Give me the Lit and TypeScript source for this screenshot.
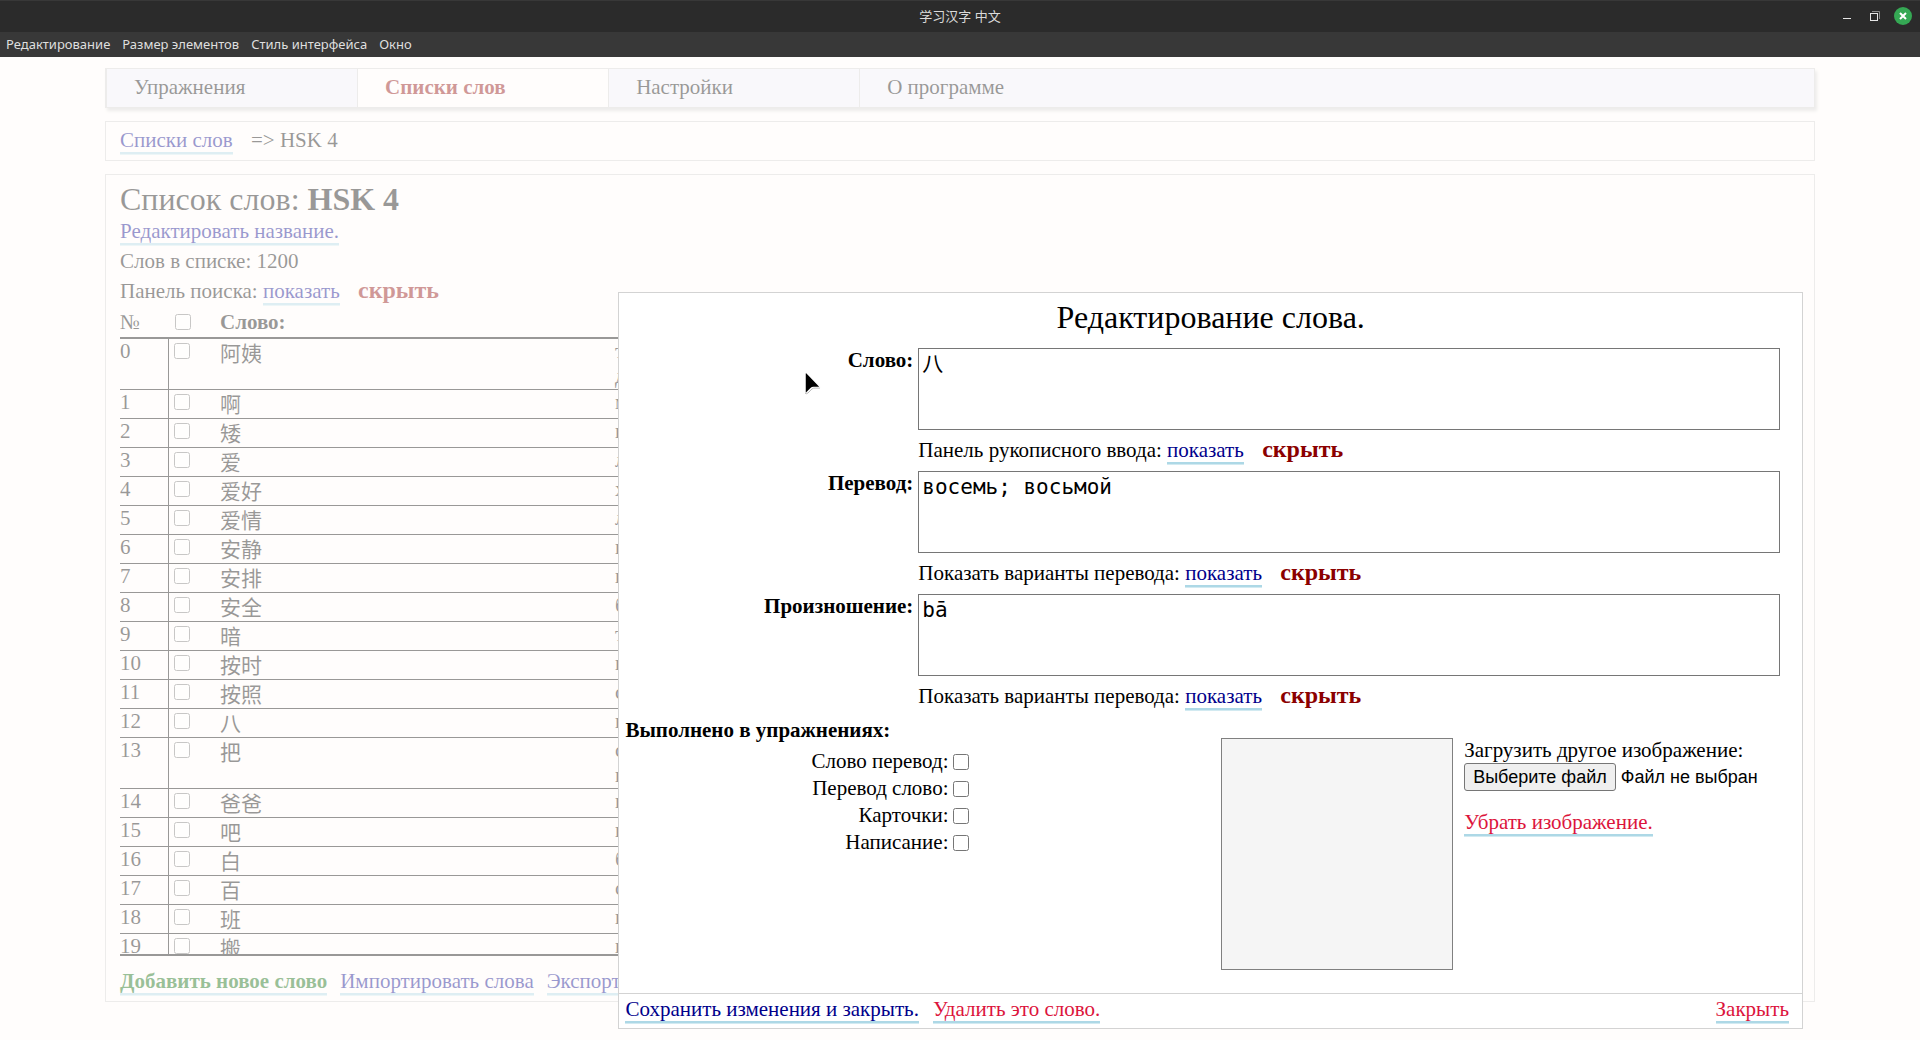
import { LitElement, html, css } from "lit";
import { customElement, property } from "lit/decorators.js";

const serif = css`"Liberation Serif", "Noto Sans CJK SC", serif`;

const linkStyles = css`
  a {
    display: inline-block;
    line-height: 24px;
    color: darkblue;
    text-decoration: none;
    border-bottom: 2px solid lightblue;
    box-shadow: 0 1px 0 #d2eaf1;
  }
  a.danger {
    color: crimson;
  }
  a.add {
    color: darkgreen;
    font-weight: bold;
  }
`;

const checkStyles = css`
  input[type="checkbox"] {
    width: 16px;
    height: 16px;
    margin: 0;
  }
`;

interface Word {
  text: string;
  translation: string[];
}

const WORDS: Word[] = [
  { text: "阿姨", translation: ["тётя", "домработница"] },
  { text: "啊", translation: ["междометие"] },
  { text: "矮", translation: ["низкий"] },
  { text: "爱", translation: ["любить"] },
  { text: "爱好", translation: ["хобби"] },
  { text: "爱情", translation: ["любовь"] },
  { text: "安静", translation: ["покой"] },
  { text: "安排", translation: ["план"] },
  { text: "安全", translation: ["безопасность"] },
  { text: "暗", translation: ["тёмный"] },
  { text: "按时", translation: ["вовремя"] },
  { text: "按照", translation: ["согласно"] },
  { text: "八", translation: ["восемь; восьмой"] },
  { text: "把", translation: ["счётное слово", "предлог"] },
  { text: "爸爸", translation: ["папа"] },
  { text: "吧", translation: ["ну"] },
  { text: "白", translation: ["белый"] },
  { text: "百", translation: ["сто"] },
  { text: "班", translation: ["группа"] },
  { text: "搬", translation: ["переносить"] },
];

/** Line with a caption and a pair of show / hide switches. */
@customElement("toggle-line")
export class ToggleLine extends LitElement {
  @property() caption = "";

  static styles = [
    linkStyles,
    css`
      :host {
        display: block;
      }
      .hide {
        margin-left: 13px;
        color: darkred;
        font-size: 24px;
        line-height: 24px;
        font-weight: bold;
      }
    `,
  ];

  render() {
    return html`${this.caption} <a href="#show">показать</a>
      <span class="hide">скрыть</span>`;
  }
}

@customElement("window-bar")
export class WindowBar extends LitElement {
  static styles = css`
    :host {
      display: block;
      font-family: "Noto Sans", "Noto Sans CJK SC", sans-serif;
    }
    .title {
      display: grid;
      grid-template-columns: 1fr auto 1fr;
      align-items: center;
      box-sizing: border-box;
      height: 32px;
      padding-bottom: 1px;
      border-top: 1px solid #383838;
      background: #2b2b2b;
      color: #dadada;
      font-size: 13px;
      line-height: 20px;
    }
    .name {
      grid-column: 2;
    }
    .buttons {
      display: flex;
      justify-content: flex-end;
      gap: 8px;
      padding-right: 7px;
    }
    button {
      display: block;
      padding: 0;
      border: 0;
      background: none;
      font: inherit;
      color: inherit;
    }
    svg {
      display: block;
    }
    .menu {
      display: flex;
      gap: 12px;
      height: 25px;
      padding: 0 6px;
      background: #383838;
      color: #dfdfdf;
      font-size: 13px;
      line-height: 25px;
    }
  `;

  render() {
    return html`
      <div class="title">
        <span class="name">学习汉字 中文</span>
        <div class="buttons">
          <button aria-label="Свернуть">
            <svg width="20" height="20" viewBox="0 0 20 20">
              <path d="M6 12.5h8" stroke="#e6e6e6" />
            </svg>
          </button>
          <button aria-label="Восстановить">
            <svg width="20" height="20" viewBox="0 0 20 20" fill="none">
              <path d="M7 5.5H14.5V13" stroke="#8c8c8c" />
              <rect x="5.500" y="7.500" width="7" height="7" stroke="#e6e6e6" />
            </svg>
          </button>
          <button aria-label="Закрыть">
            <svg width="20" height="20" viewBox="0 0 20 20">
              <circle cx="10" cy="10" r="9" fill="#35a854" />
              <path d="M7 7l6 6M13 7l-6 6" stroke="#fff" stroke-width="2" />
            </svg>
          </button>
        </div>
      </div>
      <div class="menu">
        ${["Редактирование", "Размер элементов", "Стиль интерфейса", "Окно"].map(
          (item) => html`<button>${item}</button>`
        )}
      </div>
    `;
  }
}

@customElement("word-list")
export class WordList extends LitElement {
  static styles = [
    linkStyles,
    checkStyles,
    css`
      :host {
        display: flex;
        flex-direction: column;
        min-height: 0;
        padding: 7px 13px 6px 14px;
        border: 1px solid lightgray;
        line-height: 30px;
      }
      h1 {
        margin: 0;
        font-size: 32px;
        font-weight: normal;
        line-height: 34px;
      }
      .scroll {
        flex: 1;
        min-height: 0;
        overflow: hidden;
        border-bottom: 2px solid #000;
      }
      table {
        width: 100%;
        border-spacing: 0;
        table-layout: fixed;
      }
      th,
      td {
        padding: 0;
        text-align: left;
        vertical-align: top;
        line-height: 25px;
        border-bottom: 1px solid #000;
      }
      th {
        padding: 4px 0 2px;
        border-bottom-width: 2px;
      }
      th.num {
        font-weight: normal;
      }
      .num {
        width: 48px;
      }
      .check {
        width: 52px;
      }
      .word {
        width: 395px;
      }
      td.check {
        border-left: 1px solid #000;
      }
      td.word {
        padding-bottom: 2px;
        line-height: 26px;
        font-family: "Noto Sans CJK SC", sans-serif;
      }
      .check input {
        display: block;
        margin: 4px 0 0 5px;
      }
      th.check input {
        margin-left: 7px;
      }
      footer {
        display: flex;
        gap: 13px;
        padding-top: 13px;
      }
    `,
  ];

  render() {
    return html`
      <h1>Список слов: <b>HSK 4</b></h1>
      <div><a href="#rename">Редактировать название.</a></div>
      <div>Слов в списке: 1200</div>
      <toggle-line caption="Панель поиска:"></toggle-line>
      <div class="scroll">
        <table>
          <thead>
            <tr>
              <th class="num">№</th>
              <th class="check">
                <input type="checkbox" aria-label="Все слова" />
              </th>
              <th class="word">Слово:</th>
              <th></th>
            </tr>
          </thead>
          <tbody>
            ${WORDS.map(
              (word, i) => html`<tr>
                <td class="num">${i}</td>
                <td class="check">
                  <input type="checkbox" aria-label=${word.text} />
                </td>
                <td class="word" lang="zh">${word.text}</td>
                <td>${word.translation.map((t) => html`<div>${t}</div>`)}</td>
              </tr>`
            )}
          </tbody>
        </table>
      </div>
      <footer>
        <a class="add" href="#add">Добавить новое слово</a>
        <a href="#import">Импортировать слова</a>
        <a href="#export">Экспортировать слова</a>
      </footer>
    `;
  }
}

@customElement("word-dialog")
export class WordDialog extends LitElement {
  static styles = [
    linkStyles,
    checkStyles,
    css`
      :host {
        display: block;
        box-sizing: border-box;
        border: 1px solid lightgray;
        background: #fff;
        line-height: 25px;
      }
      h2 {
        margin: 0;
        padding: 6px 0 13px;
        font-size: 32px;
        font-weight: normal;
        line-height: 36px;
        text-align: center;
      }
      .fields {
        display: grid;
        grid-template-columns: 25% 1fr;
        column-gap: 5px;
        padding: 0 22px 0 5px;
      }
      .fields label {
        font-weight: bold;
        text-align: right;
      }
      textarea {
        display: block;
        box-sizing: border-box;
        width: 100%;
        height: 82px;
        margin: 0;
        padding: 2px 3px;
        border: 1px solid #767676;
        border-radius: 0;
        background: #fff;
        color: #000;
        font-family: "DejaVu Sans Mono", "Noto Sans CJK SC", monospace;
        font-size: 21px;
        line-height: 26px;
        resize: none;
      }
      toggle-line {
        line-height: 41px;
      }
      .extra {
        display: grid;
        grid-template-columns: 29.8% 21.8% 232px 1fr;
        padding: 1px 22px 23px 6px;
      }
      .done {
        display: flex;
        flex-direction: column;
      }
      .done b {
        margin-bottom: 5px;
      }
      .done label {
        display: flex;
        justify-content: flex-end;
        align-items: center;
        gap: 5px;
        line-height: 27px;
      }
      .picture {
        grid-column: 3;
        box-sizing: border-box;
        height: 232px;
        margin-top: 20px;
        border: 1px solid #808080;
        background: whitesmoke;
      }
      .upload {
        margin-top: 20px;
        padding-left: 11px;
      }
      .file {
        display: flex;
        align-items: center;
        gap: 5px;
        margin-bottom: 19px;
        font-family: "Liberation Sans", sans-serif;
        font-size: 18px;
        line-height: 22px;
      }
      .file input {
        position: absolute;
        width: 1px;
        height: 1px;
        opacity: 0;
      }
      .choose {
        padding: 2px 8px;
        border: 1px solid #767676;
        border-radius: 3px;
        background: #efefef;
      }
      footer {
        display: flex;
        gap: 14px;
        padding: 3px 13px 5px 6px;
        border-top: 1px solid lightgray;
      }
      .close {
        margin-left: auto;
      }
    `,
  ];

  private field(id: string, label: string, value: string, hint: string) {
    return html`
      <label for=${id}>${label}</label>
      <div>
        <textarea id=${id} .value=${value}></textarea>
        <toggle-line caption=${hint}></toggle-line>
      </div>
    `;
  }

  render() {
    return html`
      <h2>Редактирование слова.</h2>
      <div class="fields">
        ${this.field("word", "Слово:", "八", "Панель рукописного ввода:")}
        ${this.field("tr", "Перевод:", "восемь; восьмой", "Показать варианты перевода:")}
        ${this.field("say", "Произношение:", "bā", "Показать варианты перевода:")}
      </div>
      <div class="extra">
        <div class="done">
          <b>Выполнено в упражнениях:</b>
          ${["Слово перевод:", "Перевод слово:", "Карточки:", "Написание:"].map(
            (name) => html`<label>${name}<input type="checkbox" /></label>`
          )}
        </div>
        <div class="picture"></div>
        <div class="upload">
          <div>Загрузить другое изображение:</div>
          <label class="file">
            <input type="file" />
            <span class="choose">Выберите файл</span>
            <span>Файл не выбран</span>
          </label>
          <a class="danger" href="#remove">Убрать изображение.</a>
        </div>
      </div>
      <footer>
        <a href="#save">Сохранить изменения и закрыть.</a>
        <a class="danger" href="#delete">Удалить это слово.</a>
        <a class="danger close" href="#close">Закрыть</a>
      </footer>
    `;
  }
}

@customElement("app-root")
export class AppRoot extends LitElement {
  static styles = [
    linkStyles,
    css`
      :host {
        display: flex;
        flex-direction: column;
        position: relative;
        height: 100vh;
        overflow: hidden;
        background: #fffdfc;
        color: #000;
        font-family: ${serif};
        font-size: 21px;
      }
      .page {
        flex: 1;
        min-height: 0;
        position: relative;
        display: flex;
        flex-direction: column;
        gap: 13px;
        padding: 11px 0 38px;
      }
      .page > nav,
      .crumbs,
      word-list {
        box-sizing: border-box;
        width: calc(100% - 210px);
        margin: 0 auto;
      }
      nav {
        display: flex;
        height: 40px;
        border: 1px solid lightgray;
        background: #eff1fa;
        box-shadow: 2px 3px 3px lightgray;
      }
      nav a {
        box-sizing: border-box;
        width: 14.7%;
        padding-left: 27px;
        border: 0;
        border-left: 1px solid lightgray;
        box-shadow: none;
        color: #000;
        line-height: 36px;
      }
      nav a.current {
        background: #fffdfc;
        color: darkred;
        font-weight: bold;
      }
      .crumbs {
        height: 40px;
        padding: 0 14px;
        border: 1px solid lightgray;
        line-height: 37px;
      }
      .crumbs a {
        margin-right: 13px;
      }
      word-list {
        flex: 1;
      }
      .overlay {
        position: absolute;
        inset: 0;
        display: flex;
        justify-content: flex-end;
        align-items: flex-end;
        padding: 0 117px 11px 0;
        background: rgba(255, 253, 252, 0.6);
      }
      word-dialog {
        width: 65.7%;
      }
      .pointer {
        position: absolute;
        left: 803px;
        top: 371px;
      }
    `,
  ];

  render() {
    return html`
      <window-bar></window-bar>
      <div class="page">
        <nav>
          <a href="#exercises">Упражнения</a>
          <a class="current" href="#lists">Списки слов</a>
          <a href="#settings">Настройки</a>
          <a href="#about">О программе</a>
        </nav>
        <div class="crumbs"><a href="#lists">Списки слов</a> =&gt; HSK 4</div>
        <word-list></word-list>
        <div class="overlay"><word-dialog></word-dialog></div>
      </div>
      <svg class="pointer" width="20" height="26" viewBox="0 0 20 26">
        <path d="M2 3v18q0 2 2 .5l4-4q1-1 2.500-1H16q2 0 .5-1.500L4 2Q2 .5 2 3z"
          fill="#000" stroke="#fff" stroke-width="1.500" />
        <path d="M2 22q1 1.500 3 0l4-4q1-1 3-.9h5" fill="none" stroke="#bbb" />
      </svg>
    `;
  }
}
